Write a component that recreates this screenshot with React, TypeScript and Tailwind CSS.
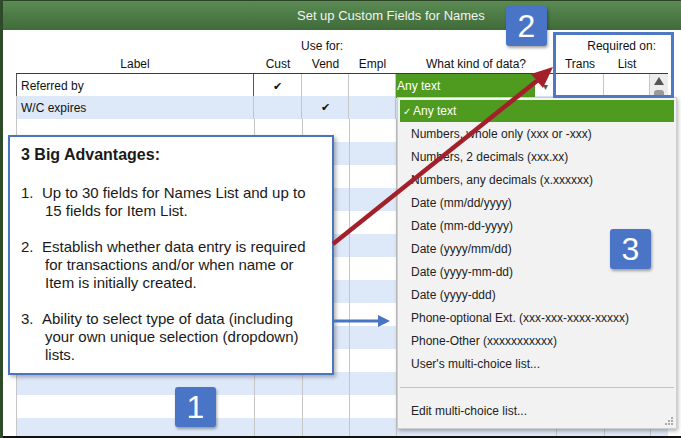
import React from "react";

const cols = "grid grid-cols-[238px_48px_47px_47px_160px_48px_46px_18px]";

const menuItems = [
  "Numbers, whole only (xxx or -xxx)",
  "Numbers, 2 decimals (xxx.xx)",
  "Numbers, any decimals (x.xxxxxx)",
  "Date (mm/dd/yyyy)",
  "Date (mm-dd-yyyy)",
  "Date (yyyy/mm/dd)",
  "Date (yyyy-mm-dd)",
  "Date (yyyy-ddd)",
  "Phone-optional Ext. (xxx-xxx-xxxx-xxxxx)",
  "Phone-Other (xxxxxxxxxxx)",
  "User's multi-choice list...",
];

function Badge({ n, className }: { n: string; className: string }) {
  return (
    <div
      className={`absolute w-[41px] h-[40px] rounded-[3px] bg-[#4a74c6] text-white text-[32px] leading-none flex items-center justify-center shadow-[1px_2px_3px_rgba(0,0,0,0.35)] ${className}`}
    >
      {n}
    </div>
  );
}

function Row({ i }: { i: number }) {
  const blue = i % 2 === 1;
  return (
    <div className={`${cols} h-[23px] ${blue ? "bg-[#dde8f8]" : "bg-white"}`}>
      {Array.from({ length: 8 }).map((_, c) => (
        <div key={c} className={c < 7 ? "border-r border-[#c6c6c6]" : ""} />
      ))}
    </div>
  );
}

export default function App() {
  return (
    <div className="relative w-[681px] h-[438px] overflow-hidden bg-white border-l-[3px] border-[#2e4a2a] font-['Liberation_Sans',Arial,sans-serif] text-[#111]">
      {/* title bar */}
      <div className="h-[30px] border-t border-[#2b4427] bg-gradient-to-b from-[#5b8b53] to-[#3f6b39] flex items-center pl-[294px] text-[13px] text-[#f1f4ef]">
        Set up Custom Fields for Names
      </div>

      {/* headers */}
      <div className="ml-[13px] pt-[7px] text-[12px]">
        <div className={`${cols} h-[18px] items-center`}>
          <div />
          <div className="col-span-3 text-center pr-[6px]">Use for:</div>
          <div />
          <div className="col-span-3 text-right pr-[12px]">Required on:</div>
        </div>
        <div className={`${cols} h-[18px] items-center text-center`}>
          <div>Label</div>
          <div>Cust</div>
          <div>Vend</div>
          <div>Empl</div>
          <div>What kind of data?</div>
          <div>Trans</div>
          <div>List</div>
          <div />
        </div>
      </div>

      {/* table */}
      <div className="ml-[13px] w-[652px] border-t border-[#3a3a3a] text-[12px]">
        <div className={`${cols} h-[22px] bg-white items-stretch`}>
          <div className="border-l border-r border-[#555] flex items-center pl-[4px]">Referred by</div>
          <div className="border-r border-[#c6c6c6] flex items-center justify-center text-[11px]">✔</div>
          <div className="border-r border-[#c6c6c6]" />
          <div className="border-r border-[#c6c6c6]" />
          <div className="border-r border-[#c6c6c6] flex">
            <div className="w-[139px] bg-[#4f9b1f] text-white flex items-center pl-[1px]">Any text</div>
            <div className="flex-1 flex items-center justify-center text-[10px] text-[#555]">▾</div>
          </div>
          <div className="border-r border-[#c6c6c6]" />
          <div className="border-r border-[#c6c6c6]" />
          <div className="bg-[#ececec] flex flex-col items-center pt-[3px]">
            <svg width="10" height="8" viewBox="0 0 10 8">
              <path d="M5 0 L10 8 L0 8 Z" fill="#555" />
            </svg>
            <div className="mt-[5px] w-[10px] h-[8px] rounded-t-[3px] bg-[#9a9a9a]" />
          </div>
        </div>
        <div className={`${cols} h-[23px] bg-[#dde8f8] items-stretch`}>
          <div className="border-l border-r border-[#c6c6c6] flex items-center pl-[4px]">W/C expires</div>
          <div className="border-r border-[#c6c6c6]" />
          <div className="border-r border-[#c6c6c6] flex items-center justify-center text-[11px]">✔</div>
          <div className="border-r border-[#c6c6c6]" />
          <div className="border-r border-[#c6c6c6]" />
          <div className="border-r border-[#c6c6c6]" />
          <div className="border-r border-[#c6c6c6]" />
          <div />
        </div>
        <div className="border-l border-[#c6c6c6]">
          {Array.from({ length: 14 }).map((_, i) => (
            <Row key={i} i={i} />
          ))}
        </div>
      </div>

      {/* dropdown list */}
      <div className="absolute left-[394px] top-[97px] w-[280px] h-[332px] bg-[#f2f2f2] border border-[#cfcfcf] shadow-[1px_2px_4px_rgba(0,0,0,0.3)] pt-[2px] text-[12px] text-[#222]">
        <div className="mx-[2px] h-[22px] bg-[#4f9b1f] text-white flex items-center pl-[3px]">
          <span className="text-[10px] mr-[2px]">✓</span>Any text
        </div>
        {menuItems.map((m) => (
          <div key={m} className="h-[23px] flex items-center pl-[13px]">
            {m}
          </div>
        ))}
        <div className="mx-[2px] mt-[12px] border-t border-[#c4c4c4]" />
        <div className="mt-[11px] h-[23px] flex items-center pl-[13px]">Edit multi-choice list...</div>
        <div className="absolute right-[3px] bottom-[3px] grid grid-cols-3 gap-[1px]">
          {[0, 0, 1, 0, 1, 1, 1, 1, 1].map((v, k) => (
            <div key={k} className={`w-[2px] h-[2px] ${v ? "bg-[#aaa]" : ""}`} />
          ))}
        </div>
      </div>

      {/* callout box 2 */}
      <div className="absolute left-[550px] top-[32px] w-[121px] h-[66px] border-[3px] border-[#4f78c4]" />

      {/* callout box 1 */}
      <div className="absolute left-[5px] top-[135px] w-[326px] h-[240px] bg-white border-2 border-[#4a74c0] shadow-[2px_2px_4px_rgba(0,0,0,0.3)] pl-[11px] pt-[9px] text-[15px] leading-[18px] text-[#1a1a1a]">
        <div className="font-bold text-[16px]">3 Big Advantages:</div>
        <div className="h-[20px]" />
        {[
          ["1.", "Up to 30 fields for Names List and up to 15 fields for Item List."],
          ["2.", "Establish whether data entry is required for transactions and/or when name or Item is initially created."],
          ["3.", "Ability to select type of data (including your own unique selection (dropdown) lists."],
        ].map(([n, t]) => (
          <div key={n} className="flex mb-[18px]">
            <div className="w-[21px] shrink-0">{n}</div>
            <div className="w-[278px] pl-[3px] -indent-[3px]">{t}</div>
          </div>
        ))}
      </div>

      {/* arrows */}
      <svg className="absolute left-[-3px] top-0 pointer-events-none" width="681" height="438" viewBox="0 0 681 438">
        <line x1="333" y1="244" x2="538" y2="80" stroke="#a3202b" strokeWidth="4.5" />
        <path d="M553 67 L531 74 L543 88 Z" fill="#a3202b" />
        <line x1="333" y1="321" x2="380" y2="321" stroke="#4a74c6" strokeWidth="3" />
        <path d="M390 321 L378 315 L378 327 Z" fill="#4a74c6" />
      </svg>

      <Badge n="1" className="left-[172px] top-[387px]" />
      <Badge n="2" className="left-[503px] top-[6px]" />
      <Badge n="3" className="left-[607px] top-[229px]" />

      {/* bottom frame edge */}
      <div className="absolute left-0 right-0 bottom-0 h-[2px] bg-[#111]" />
    </div>
  );
}
